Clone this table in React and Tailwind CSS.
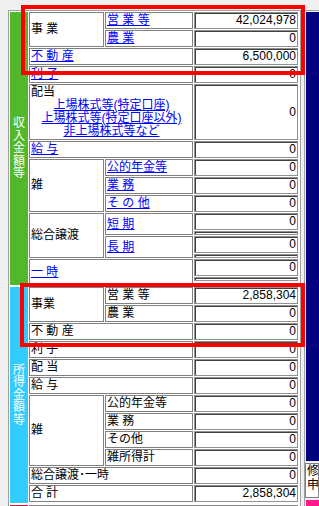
import React from 'react'

// 収入金額等 / 所得金額等 entry sheet (legacy table look)

function Box({ className = '', children }) {
  return (
    <div className={`border border-[#808080] bg-white ${className}`}>{children}</div>
  )
}

function Val({ children, h = 'h-[17px]' }) {
  return (
    <div className={`w-[104px] ${h} border border-[#909090] shadow-[inset_1px_1px_0_#404040] bg-white text-right pr-[1px] leading-[15px]`}>
      {children}
    </div>
  )
}

function Thin() {
  return <div className="w-[104px] h-[4px] border border-[#909090] shadow-[inset_1px_1px_0_#404040] bg-white" />
}

function Link({ children }) {
  return <span className="text-[#0000ff] underline">{children}</span>
}

function Strip({ color, label }) {
  return (
    <div className={`w-[18px] shrink-0 ${color} flex flex-col items-center justify-center text-white leading-[12.6px]`}>
      {label.split('').map((ch, i) => (
        <span key={i}>{ch}</span>
      ))}
    </div>
  )
}

function Income() {
  return (
    <div className="flex gap-px h-[273px]">
      <Strip color="bg-[#50b82a]" label="収入金額等" />
      <div className="flex flex-col gap-px">
        {/* 事業 */}
        <div className="flex gap-px">
          <Box className="w-[75px] flex items-center pl-px">事 業</Box>
          <div className="flex flex-col gap-px">
            <div className="flex gap-px">
              <Box className="w-[88px] h-[17px] pl-px leading-[15px]"><Link>営 業 等</Link></Box>
              <Val>42,024,978</Val>
            </div>
            <div className="flex gap-px">
              <Box className="w-[88px] h-[17px] pl-px leading-[15px]"><Link>農 業</Link></Box>
              <Val>0</Val>
            </div>
          </div>
        </div>

        <div className="flex gap-px">
          <Box className="w-[164px] h-[17px] pl-px leading-[15px]"><Link>不 動 産</Link></Box>
          <Val>6,500,000</Val>
        </div>
        <div className="flex gap-px">
          <Box className="w-[164px] h-[17px] pl-px leading-[15px]"><Link>利 子</Link></Box>
          <Val>0</Val>
        </div>

        {/* 配当 */}
        <div className="flex gap-px">
          <Box className="w-[164px] h-[56px] pl-px leading-[13px] pt-px">
            <div>配当</div>
            <div className="text-center"><Link>上場株式等(特定口座)</Link></div>
            <div className="text-center"><Link>上場株式等(特定口座以外)</Link></div>
            <div className="text-center"><Link>非上場株式等など</Link></div>
          </Box>
          <Val h="h-[56px] flex items-center justify-end">0</Val>
        </div>

        <div className="flex gap-px">
          <Box className="w-[164px] h-[17px] pl-px leading-[15px]"><Link>給 与</Link></Box>
          <Val>0</Val>
        </div>

        {/* 雑 */}
        <div className="flex gap-px">
          <Box className="w-[75px] flex items-center pl-px">雑</Box>
          <div className="flex flex-col gap-px">
            {['公的年金等', '業 務', 'そ の 他'].map(t => (
              <div key={t} className="flex gap-px">
                <Box className="w-[88px] h-[17px] pl-px leading-[15px]"><Link>{t}</Link></Box>
                <Val>0</Val>
              </div>
            ))}
          </div>
        </div>

        {/* 総合譲渡 */}
        <div className="flex gap-px">
          <Box className="w-[75px] flex items-center pl-px">総合譲渡</Box>
          <div className="flex flex-col gap-px">
            {['短 期', '長 期'].map(t => (
              <div key={t} className="flex gap-px">
                <Box className="w-[88px] h-[22px] pl-px flex items-center"><Link>{t}</Link></Box>
                <div className="flex flex-col gap-px">
                  <Val>0</Val>
                  <Thin />
                </div>
              </div>
            ))}
          </div>
        </div>

        <div className="flex gap-px flex-1">
          <Box className="w-[164px] pl-px flex items-center"><Link>一 時</Link></Box>
          <div className="flex flex-col gap-px">
            <Val>0</Val>
            <Thin />
          </div>
        </div>
      </div>
    </div>
  )
}

function Earnings() {
  const row = (label, value = '0') => (
    <div key={label} className="flex gap-px">
      <Box className="w-[164px] h-[17px] pl-px leading-[15px]">{label}</Box>
      <Val>{value}</Val>
    </div>
  )
  const sub = (label, value = '0') => (
    <div key={label} className="flex gap-px">
      <Box className="w-[88px] h-[17px] pl-px leading-[15px]">{label}</Box>
      <Val>{value}</Val>
    </div>
  )
  return (
    <div className="flex gap-px h-[216px]">
      <Strip color="bg-[#33ccff]" label="所得金額等" />
      <div className="flex flex-col gap-px">
        <div className="flex gap-px">
          <Box className="w-[75px] flex items-center pl-px">事業</Box>
          <div className="flex flex-col gap-px">
            {sub('営 業 等', '2,858,304')}
            {sub('農 業')}
          </div>
        </div>
        {row('不 動 産')}
        {row('利 子')}
        {row('配 当')}
        {row('給 与')}
        <div className="flex gap-px">
          <Box className="w-[75px] flex items-center pl-px">雑</Box>
          <div className="flex flex-col gap-px">
            {sub('公的年金等')}
            {sub('業 務')}
            {sub('その他')}
            {sub('雑所得計')}
          </div>
        </div>
        {row('総合譲渡･一時')}
        {row('合 計', '2,858,304')}
      </div>
    </div>
  )
}

function Separate() {
  return (
    <div className="flex gap-px h-[20px]">
      <div className="w-[18px] shrink-0 bg-[#e0103c]" />
      <Box className="w-[269px] pl-px pt-[2px] leading-[15px]"><Link>分離課税</Link></Box>
    </div>
  )
}

function SidePanel() {
  return (
    <div className="ml-[3px] w-[15px] border-l border-t border-[#a0a0a0] pl-px pt-px flex flex-col gap-[2px]">
      <div className="h-[449px] bg-[#000080]" />
      <div className="h-[35px] border border-[#808080] bg-white -ml-px leading-[14px] pl-px overflow-hidden">
        <div>修</div>
        <div>申</div>
      </div>
      <div className="h-[20px] bg-[#ff1a8c]" />
    </div>
  )
}

export default function App() {
  return (
    <div className="relative w-[319px] h-[506px] overflow-hidden bg-[#f0f0f0] text-[12px] leading-[15px] text-black font-['Liberation_Sans','Noto_Sans_CJK_JP',sans-serif]">
      <div className="flex pt-[10px]">
        <div className="ml-[8px] w-[293px] border-l border-t border-r border-[#a0a0a0] p-px bg-white flex flex-col gap-[2px]">
          <Income />
          <Earnings />
          <Separate />
        </div>
        <SidePanel />
      </div>

      {/* highlight frames over the 事業・不動産 rows */}
      <div className="absolute left-[21px] top-[5px] w-[284px] h-[70px] border-4 border-[#ff0000]" />
      <div className="absolute left-[20px] top-[283px] w-[285px] h-[64px] border-4 border-[#ff0000]" />
    </div>
  )
}
